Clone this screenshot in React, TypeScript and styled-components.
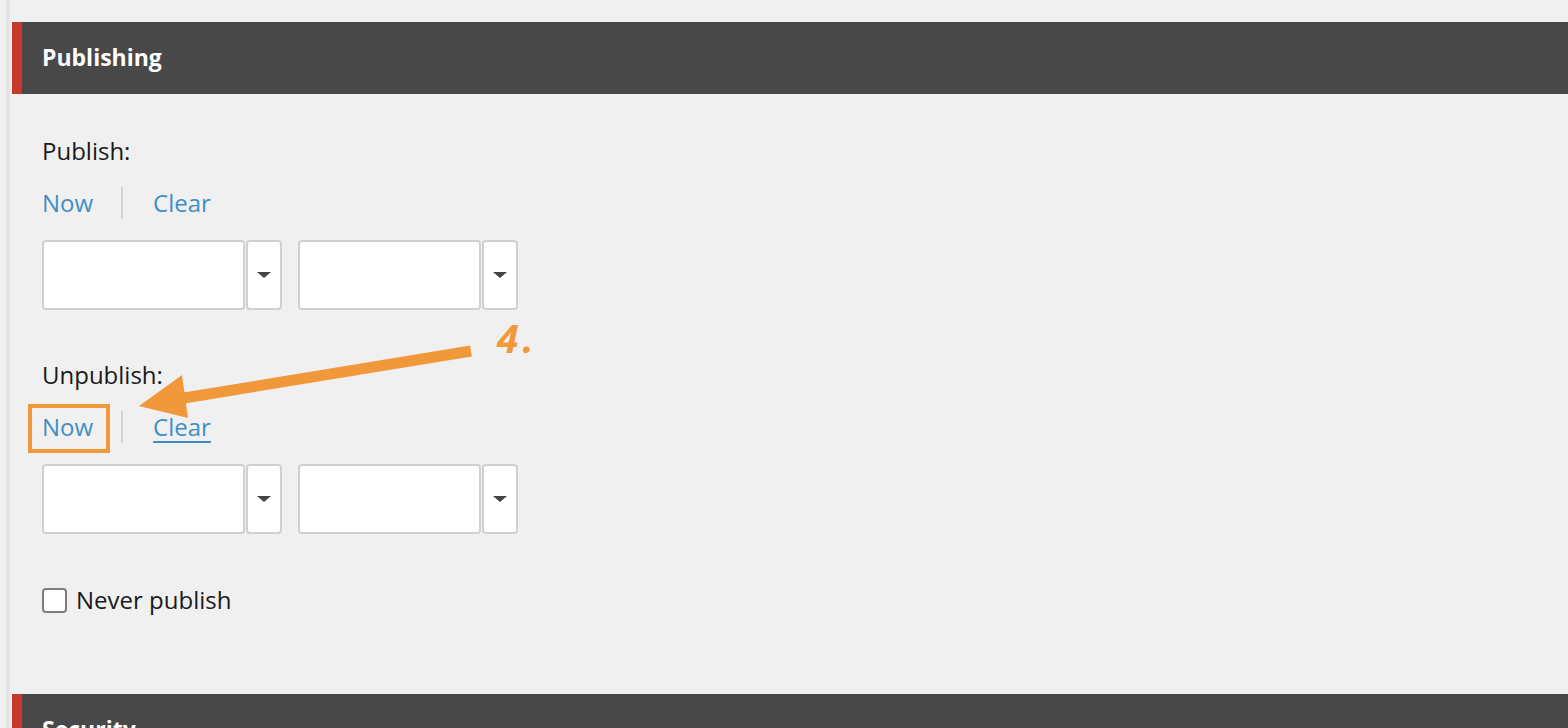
import React from 'react'
import styled, { createGlobalStyle } from 'styled-components'

const GlobalStyle = createGlobalStyle`
  html, body {
    margin: 0;
    padding: 0;
    background: #f0f0f0;
    overflow: hidden;
  }
  body {
    font-family: "Open Sans", "Liberation Sans", sans-serif;
    color: #1a1a1a;
  }
`

const Page = styled.div`
  width: 1568px;
  height: 728px;
  padding-left: 6px;
  box-sizing: border-box;
  overflow: hidden;
`

const Frame = styled.div`
  position: relative;
  height: 100%;
  border-left: 4px solid #e4e4e4;
  padding-left: 2px;
  padding-top: 22px;
  box-sizing: border-box;
`

const PanelHeader = styled.div`
  height: 72px;
  background: #484848;
  border-left: 10px solid #c9392b;
  padding-left: 20px;
  color: #ffffff;
  font-size: 23px;
  font-weight: 700;
  line-height: 70px;
`

const PanelBody = styled.div`
  padding: 39px 30px 76px;
`

const FieldGroup = styled.div`
  & + & {
    margin-top: 47px;
  }
`

const FieldLabel = styled.div`
  font-size: 24px;
  line-height: 36px;
  color: #1a1a1a;
`

const LinkRow = styled.div`
  display: flex;
  align-items: center;
  margin-top: 16px;
  height: 36px;
`

const ActionLink = styled.a<{ $hover?: boolean }>`
  font-size: 24px;
  line-height: 36px;
  color: #3f8fc4;
  text-decoration: ${p => (p.$hover ? 'underline' : 'none')};
  text-decoration-thickness: 2px;
  text-underline-offset: 5px;
  cursor: pointer;
`

const Divider = styled.span`
  width: 2px;
  height: 32px;
  background: #d2d2d2;
  margin: 0 30px 0 28px;
`

const InputRow = styled.div`
  display: flex;
  margin-top: 19px;
  gap: 16px;
`

const Combo = styled.div`
  display: flex;
  gap: 1px;
`

const TextBox = styled.div<{ $w: number }>`
  width: ${p => p.$w}px;
  height: 70px;
  box-sizing: border-box;
  background: #ffffff;
  border: 2px solid #d0d0d0;
  border-radius: 4px;
`

const DropButton = styled.div`
  width: 36px;
  height: 70px;
  box-sizing: border-box;
  background: #ffffff;
  border: 2px solid #d0d0d0;
  border-radius: 4px;
  display: flex;
  align-items: center;
  justify-content: center;
`

const Caret = styled.span`
  width: 0;
  height: 0;
  border-left: 7px solid transparent;
  border-right: 7px solid transparent;
  border-top: 6px solid #444444;
`

const CheckRow = styled.label`
  display: flex;
  align-items: center;
  gap: 9px;
  margin-top: 48px;
  font-size: 24px;
  line-height: 36px;
`

const CheckBox = styled.span`
  width: 25px;
  height: 25px;
  box-sizing: border-box;
  background: #ffffff;
  border: 2px solid #7d7d7d;
  border-radius: 4px;
`

// annotation layer, coordinates relative to the frame's padding box (page x - 10)
const Highlight = styled.div`
  position: absolute;
  left: 18px;
  top: 404px;
  width: 82px;
  height: 49px;
  box-sizing: border-box;
  border: 4px solid #f0983a;
  pointer-events: none;
`

const ArrowSvg = styled.svg`
  position: absolute;
  left: -10px;
  top: 0;
  pointer-events: none;
`

const StepLabel = styled.div`
  position: absolute;
  left: 487px;
  top: 314px;
  font-size: 39px;
  line-height: 48px;
  font-weight: 700;
  font-style: italic;
  letter-spacing: 4px;
  color: #f0983a;
  pointer-events: none;
`

const DateTimeInputs: React.FC = () => (
  <InputRow>
    <Combo>
      <TextBox $w={203} />
      <DropButton><Caret /></DropButton>
    </Combo>
    <Combo>
      <TextBox $w={183} />
      <DropButton><Caret /></DropButton>
    </Combo>
  </InputRow>
)

export default function App() {
  return (
    <>
      <GlobalStyle />
      <Page>
        <Frame>
          <PanelHeader>Publishing</PanelHeader>
          <PanelBody>
            <FieldGroup>
              <FieldLabel>Publish:</FieldLabel>
              <LinkRow>
                <ActionLink>Now</ActionLink>
                <Divider />
                <ActionLink>Clear</ActionLink>
              </LinkRow>
              <DateTimeInputs />
            </FieldGroup>
            <FieldGroup>
              <FieldLabel>Unpublish:</FieldLabel>
              <LinkRow>
                <ActionLink>Now</ActionLink>
                <Divider />
                <ActionLink $hover>Clear</ActionLink>
              </LinkRow>
              <DateTimeInputs />
            </FieldGroup>
            <CheckRow>
              <CheckBox />
              Never publish
            </CheckRow>
          </PanelBody>
          <PanelHeader>Security</PanelHeader>

          <Highlight />
          <ArrowSvg width="560" height="440" viewBox="0 0 560 440">
            <line x1="471" y1="351" x2="178" y2="399" stroke="#f0983a" strokeWidth="11" />
            <polygon points="139,406 182,375 188,418" fill="#f0983a" />
          </ArrowSvg>
          <StepLabel>4.</StepLabel>
        </Frame>
      </Page>
    </>
  )
}
